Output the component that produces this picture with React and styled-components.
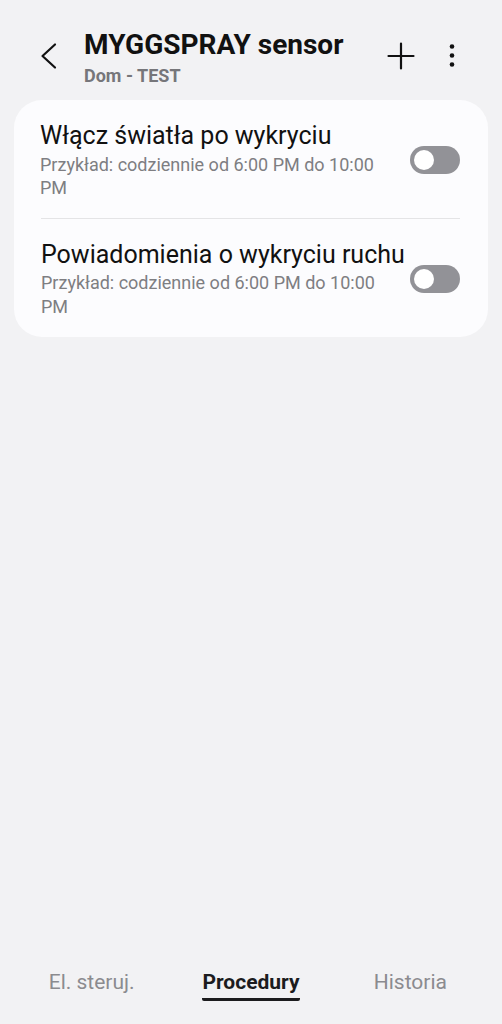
import { createGlobalStyle, styled } from 'styled-components';

const Global = createGlobalStyle`
    html, body {
        margin: 0;
        padding: 0;
        background: #f2f2f4;
        font-family: Roboto, "Noto Sans", sans-serif;
    }
`;

const Page = styled.div`
    width: 502px;
    height: 1024px;
    display: flex;
    flex-direction: column;
    background: #f2f2f4;
`;

const Header = styled.header`
    display: flex;
    align-items: flex-start;
    padding: 28px 44px 13px 36px;
`;

const IconButton = styled.button`
    border: none;
    background: none;
    padding: 0;
    margin: ${(p) => p.$margin || '0'};
    display: flex;
    align-items: center;
    justify-content: center;
    width: ${(p) => p.$size || 28}px;
    height: 28px;
    color: #111;
    flex-shrink: 0;
`;

const TitleBlock = styled.div`
    flex: 1;
    display: flex;
    flex-direction: column;
    margin-left: 24px;
`;

const Title = styled.h1`
    margin: 0;
    font-size: 28px;
    font-weight: 700;
    line-height: 34px;
    color: #111;
`;

const Subtitle = styled.div`
    font-size: 18px;
    font-weight: 700;
    line-height: 22px;
    color: #76767a;
    margin-top: 3px;
`;

const Card = styled.section`
    margin: 0 14px;
    background: #fcfcfe;
    border-radius: 28px;
    padding: 0 28px 1px 26px;
`;

const Row = styled.div`
    display: flex;
    align-items: center;
    padding: 21px 0 18px;
    border-top: ${(p) => (p.$first ? 'none' : '1px solid #e4e4e6')};
    margin-left: ${(p) => (p.$first ? 0 : 1)}px;
`;

const RowText = styled.div`
    flex: 1;
    min-width: 0;
    padding-right: 24px;
`;

const RowTitle = styled.div`
    font-size: 25px;
    line-height: 30px;
    color: #111;
    white-space: nowrap;
`;

const RowSub = styled.div`
    font-size: 18px;
    line-height: 23.5px;
    color: #7e7e82;
    margin-top: 1.5px;
`;

const Switch = styled.div`
    width: 50px;
    height: 28px;
    border-radius: 14px;
    background: #929297;
    flex-shrink: 0;
    display: flex;
    align-items: center;
    padding-left: 4px;
    box-sizing: border-box;
`;

const Thumb = styled.div`
    width: 20px;
    height: 20px;
    border-radius: 50%;
    background: #fff;
`;

const Spacer = styled.div`
    flex: 1;
`;

const Tabs = styled.nav`
    display: grid;
    grid-template-columns: repeat(3, 1fr);
    padding: 0 12px 23px;
`;

const Tab = styled.div`
    display: flex;
    justify-content: center;
`;

const TabLabel = styled.span`
    font-size: 21px;
    line-height: 26px;
    padding-bottom: 3px;
    font-weight: ${(p) => (p.$active ? 700 : 400)};
    color: ${(p) => (p.$active ? '#1c1c1e' : '#8b8b8f')};
    border-bottom: ${(p) => (p.$active ? '3px solid #1c1c1e' : '3px solid transparent')};
    border-radius: 0 0 2px 2px;
`;

const rows = [
    'Włącz światła po wykryciu',
    'Powiadomienia o wykryciu ruchu',
];

export default function App() {
    return (
        <Page>
            <Global />
            <Header>
                <IconButton $size={24} $margin="14px 0 0 0">
                    <svg width="24" height="28" viewBox="0 0 24 28" fill="none" stroke="#111" strokeWidth="2.2" strokeLinecap="round" strokeLinejoin="round">
                        <path d="M19 2.5 L6.5 14 L19 25.5" />
                    </svg>
                </IconButton>
                <TitleBlock>
                    <Title>MYGGSPRAY sensor</Title>
                    <Subtitle>Dom - TEST</Subtitle>
                </TitleBlock>
                <IconButton $size={28} $margin="13.5px 31px 0 0">
                    <svg width="28" height="28" viewBox="0 0 28 28" fill="none" stroke="#111" strokeWidth="2.2" strokeLinecap="round">
                        <path d="M14 1.5 V26.5 M1.5 14 H26.5" />
                    </svg>
                </IconButton>
                <IconButton $size={12} $margin="13.5px 0 0 0">
                    <svg width="12" height="28" viewBox="0 0 12 28" fill="#111">
                        <circle cx="6" cy="4.5" r="2.3" />
                        <circle cx="6" cy="13.5" r="2.3" />
                        <circle cx="6" cy="22.5" r="2.3" />
                    </svg>
                </IconButton>
            </Header>
            <Card>
                {rows.map((r, i) => (
                    <Row key={r} $first={i === 0}>
                        <RowText>
                            <RowTitle>{r}</RowTitle>
                            <RowSub>Przykład: codziennie od 6:00 PM do 10:00 PM</RowSub>
                        </RowText>
                        <Switch>
                            <Thumb />
                        </Switch>
                    </Row>
                ))}
            </Card>
            <Spacer />
            <Tabs>
                <Tab><TabLabel>El. steruj.</TabLabel></Tab>
                <Tab><TabLabel $active>Procedury</TabLabel></Tab>
                <Tab><TabLabel>Historia</TabLabel></Tab>
            </Tabs>
        </Page>
    );
}
